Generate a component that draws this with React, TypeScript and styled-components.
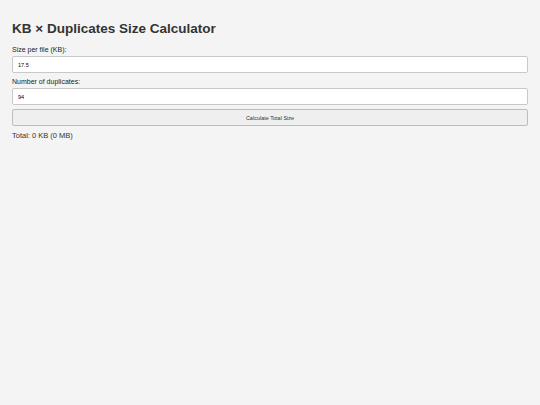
import * as React from 'react';
import {useState} from "react";
import styled, {createGlobalStyle} from "styled-components";

const GlobalStyle = createGlobalStyle`
html, body {
    margin: 0;
    padding: 0;
    background: #f4f4f4;
    font-family: "Liberation Sans", Arial, sans-serif;
    color: #222;
}
`

const Page = styled.div`
padding: 21px 12px;
display: flex;
flex-direction: column;
min-height: 405px;
box-sizing: border-box;
`

const Title = styled.h1`
margin: 0 0 8px 0;
font-size: 13.5px;
font-weight: 700;
color: #333;
line-height: 16px;
`

const Label = styled.label`
font-size: 7px;
line-height: 9px;
margin-bottom: 2px;
display: block;
`

const Field = styled.input`
width: 100%;
box-sizing: border-box;
height: 17px;
padding: 0 5px;
font-size: 5.5px;
font-family: inherit;
background: #fff;
border: 1px solid #c8c8c8;
border-radius: 2px;
margin: 0 0 4px 0;
outline: none;
`

const CalcButton = styled.button`
width: 100%;
height: 17px;
box-sizing: border-box;
font-size: 5.5px;
font-family: inherit;
color: #333;
background: #efefef;
border: 1px solid #bdbdbd;
border-radius: 2px;
margin: 0;
cursor: pointer;
`

const Result = styled.div`
margin-top: 5px;
font-size: 7.5px;
line-height: 10px;
color: #333;
`

export default function App() {
    const [size, setSize] = useState("17.5");
    const [count, setCount] = useState("94");
    const [total, setTotal] = useState({kb: 0, mb: 0});

    function calculate() {
        const kb = parseFloat(size) * parseInt(count);
        if (isNaN(kb)) return;
        setTotal({kb: kb, mb: Math.round(kb / 1024 * 100) / 100});
    }

    return <>
        <GlobalStyle/>
        <Page>
            <Title>KB × Duplicates Size Calculator</Title>
            <Label htmlFor="size">Size per file (KB):</Label>
            <Field id="size" type="number" value={size} onChange={e => setSize(e.target.value)}/>
            <Label htmlFor="count">Number of duplicates:</Label>
            <Field id="count" type="number" value={count} onChange={e => setCount(e.target.value)}/>
            <CalcButton onClick={calculate}>Calculate Total Size</CalcButton>
            <Result>Total: {total.kb} KB ({total.mb} MB)</Result>
        </Page>
    </>
}
